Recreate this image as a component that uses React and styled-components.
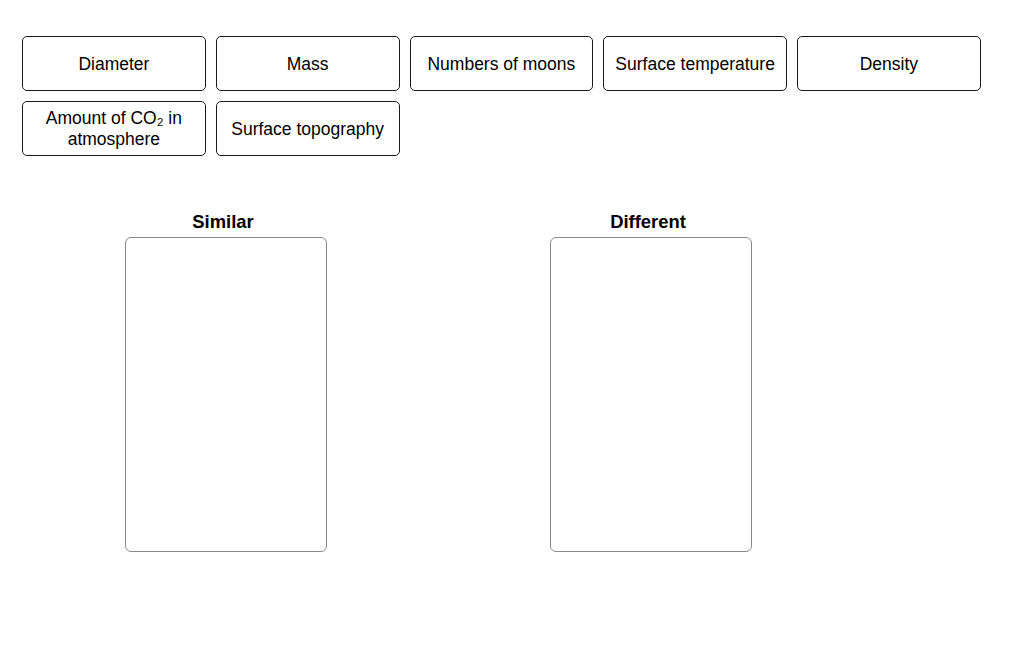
import React from "react";
import styled, { createGlobalStyle } from "styled-components";

const Global = createGlobalStyle`
  html, body { margin: 0; padding: 0; background: #fff; }
  body { font-family: "Liberation Sans", Arial, sans-serif; color: #000; }
`;

const Page = styled.div`
  padding: 36px 0 0 22px;
`;

const TileBank = styled.div`
  display: flex;
  flex-wrap: wrap;
  gap: 10px;
  width: 965px;
`;

const Tile = styled.div`
  box-sizing: border-box;
  width: 183.75px;
  height: 55px;
  border: 1px solid #1a1a1a;
  border-radius: 5px;
  display: flex;
  align-items: center;
  justify-content: center;
  text-align: center;
  font-size: 17.5px;
  line-height: 21px;
  padding: 1px 8px 0;
  background: #fff;
`;

const Bins = styled.div`
  display: flex;
  gap: 223px;
  margin-top: 55px;
  padding-left: 103px;
`;

const BinColumn = styled.div`
  display: flex;
  flex-direction: column;
  align-items: center;
  width: 202px;
`;

const BinTitle = styled.div`
  font-weight: bold;
  font-size: 18.4px;
  line-height: 22px;
  margin-bottom: 4px;
  margin-right: 6px;
`;

const BinBox = styled.div`
  box-sizing: border-box;
  width: 202px;
  height: 315px;
  border: 1px solid #8a8a8a;
  border-radius: 6px;
`;

const tiles = [
  "Diameter",
  "Mass",
  "Numbers of moons",
  "Surface temperature",
  "Density",
  "Amount of CO\u2082 in atmosphere",
  "Surface topography",
];

export default function App() {
  return (
    <>
      <Global />
      <Page>
        <TileBank>
          {tiles.map((t) => (
            <Tile key={t}>{t}</Tile>
          ))}
        </TileBank>
        <Bins>
          {["Similar", "Different"].map((b) => (
            <BinColumn key={b}>
              <BinTitle>{b}</BinTitle>
              <BinBox />
            </BinColumn>
          ))}
        </Bins>
      </Page>
    </>
  );
}
